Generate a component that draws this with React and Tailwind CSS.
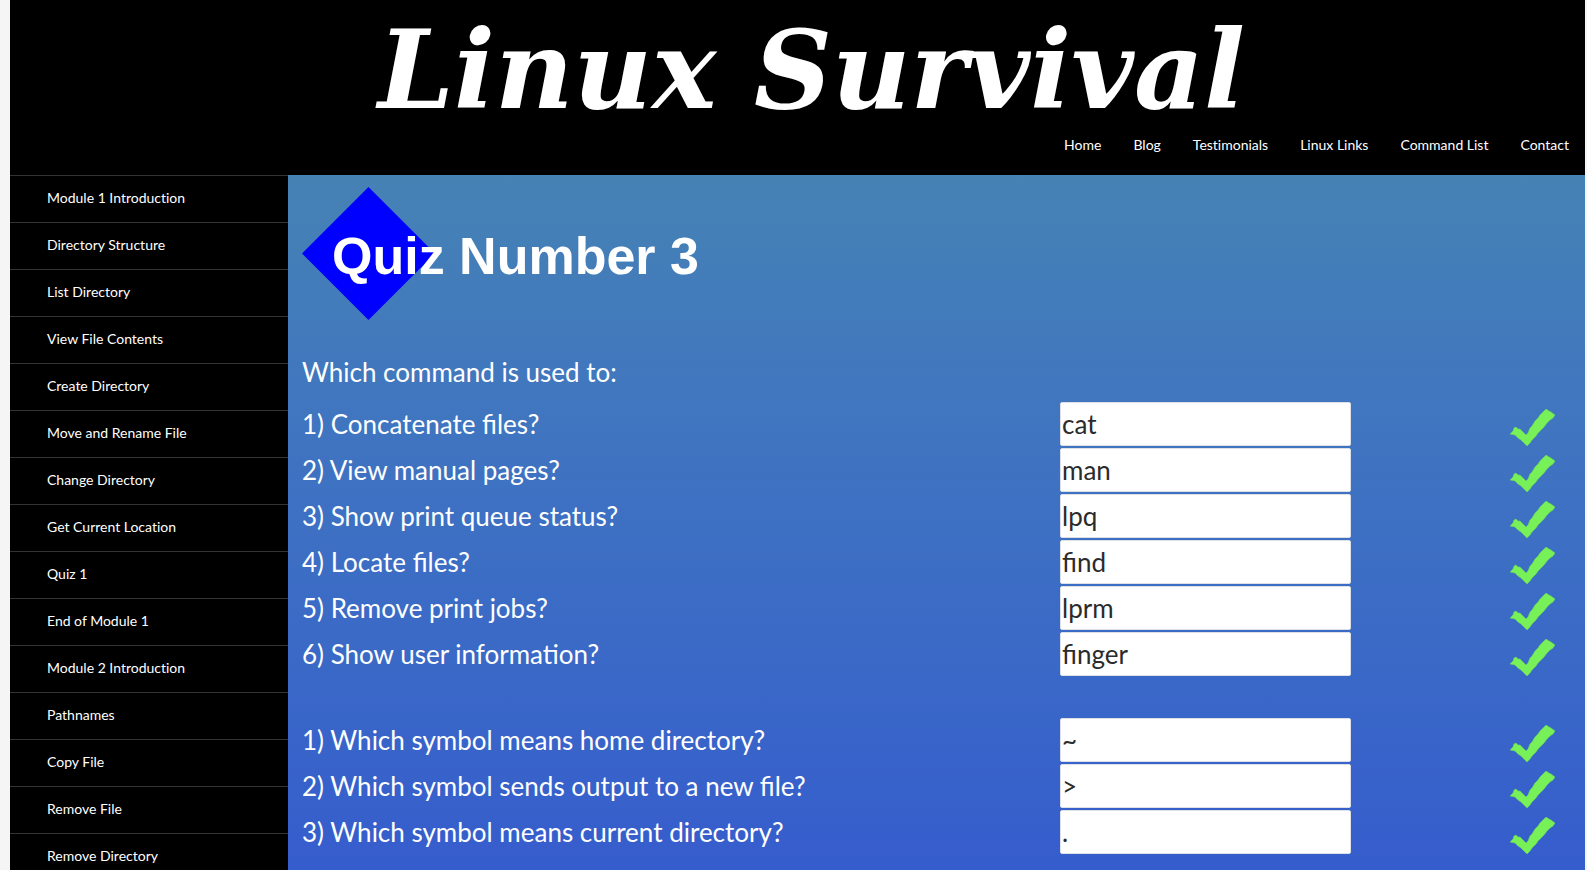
const siteLinks = ['Home', 'Blog', 'Testimonials', 'Linux Links', 'Command List', 'Contact'];

const lessons = [
  'Module 1 Introduction',
  'Directory Structure',
  'List Directory',
  'View File Contents',
  'Create Directory',
  'Move and Rename File',
  'Change Directory',
  'Get Current Location',
  'Quiz 1',
  'End of Module 1',
  'Module 2 Introduction',
  'Pathnames',
  'Copy File',
  'Remove File',
  'Remove Directory',
];

const commandQuestions = [
  ['1) Concatenate files?', 'cat'],
  ['2) View manual pages?', 'man'],
  ['3) Show print queue status?', 'lpq'],
  ['4) Locate files?', 'find'],
  ['5) Remove print jobs?', 'lprm'],
  ['6) Show user information?', 'finger'],
];

const symbolQuestions = [
  ['1) Which symbol means home directory?', '~'],
  ['2) Which symbol sends output to a new file?', '>'],
  ['3) Which symbol means current directory?', '.'],
];

function CheckMark() {
  return (
    <svg viewBox="0 0 45 37" className="mt-1.5 h-[37px] w-[45px]" role="img" aria-label="Correct">
      <path
        d="M0 25 L3 22 L4 19 L6 18 L8 20 L10 20 L13 23 L16 26 L18 24 L20 19 L22 17 L25 12 L28 9 L30 6 L33 3 L36 0 L39 2 L41 3 L45 6 L43 9 L40 11 L37 14 L34 18 L31 21 L28 24 L26 27 L22 31 L20 34 L17 37 L14 34 L11 31 L8 29 L5 26 Z"
        fill="#78f058"
        stroke="#6ad45c"
        strokeWidth="0.6"
        strokeLinejoin="round"
      />
    </svg>
  );
}

function QuestionList({ name, questions }) {
  return (
    <div className="flex flex-col gap-0.5">
      {questions.map(([question, answer], index) => (
        <div key={question} className="grid grid-cols-[758fr_450fr_75fr] items-center">
          <label htmlFor={`${name}-${index}`}>{question}</label>
          <input
            id={`${name}-${index}`}
            type="text"
            defaultValue={answer}
            className="h-11 w-[291px] rounded-xs border border-[#dcdfe4] bg-white px-px text-[#2b2b2b] outline-none"
          />
          <CheckMark />
        </div>
      ))}
    </div>
  );
}

export default function App() {
  return (
    <div className="h-screen overflow-hidden bg-[#f5f5f5] pr-0.5 pl-2.5 font-['Lato',sans-serif] text-white">
      <header className="h-[175px] bg-black">
        <h1 className="pt-2.5 pl-7 text-center font-['DejaVu_Serif',serif] text-[108px] leading-[120px] font-bold whitespace-nowrap italic">
          <a href="#home">Linux Survival</a>
        </h1>
        <nav
          aria-label="Site"
          className="flex justify-end gap-8 pt-[3px] pr-4 text-sm leading-6 [font-variant-ligatures:none]"
        >
          {siteLinks.map((label) => (
            <a key={label} href="#site">
              {label}
            </a>
          ))}
        </nav>
      </header>

      <div className="flex items-stretch">
        <nav
          aria-label="Lessons"
          className="w-[278px] shrink-0 bg-black [font-variant-ligatures:none]"
        >
          <ul>
            {lessons.map((label) => (
              <li key={label} className="border-t border-[#333333]">
                <a href="#lesson" className="block pt-2.5 pb-3 pl-[37px] text-sm leading-6">
                  {label}
                </a>
              </li>
            ))}
          </ul>
        </nav>

        <main className="min-w-0 flex-1 bg-linear-to-b from-[#4682b4] via-[#4075c0] via-35% to-[#365ccd] pt-3 pl-3.5 text-[26px] leading-10">
          <h2 className="grid items-center justify-start font-['Liberation_Sans',sans-serif] text-[52px] leading-[60px] font-bold">
            <svg viewBox="0 0 133 133" className="col-start-1 row-start-1 h-[133px] w-[133px]" aria-hidden="true">
              <path d="M66.5 0 L133 66.5 L66.5 133 L0 66.5 Z" fill="#0000ff" />
            </svg>
            <span className="col-start-1 row-start-1 pt-1 pl-[30px]">Quiz Number 3</span>
          </h2>
          <p className="pt-8 pb-2.5">Which command is used to:</p>
          <QuestionList name="command" questions={commandQuestions} />
          <div className="pt-[42px]">
            <QuestionList name="symbol" questions={symbolQuestions} />
          </div>
        </main>
      </div>
    </div>
  );
}
